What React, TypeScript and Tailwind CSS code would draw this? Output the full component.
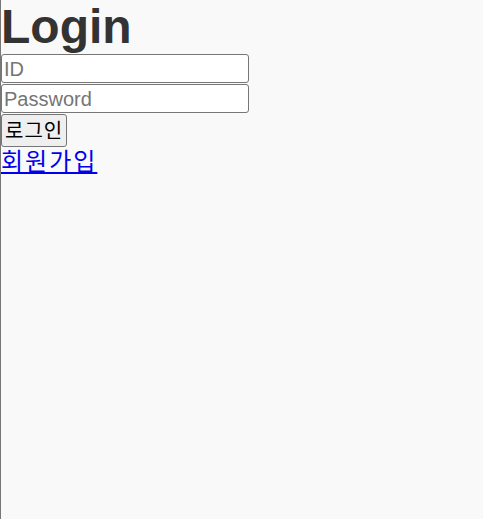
export default function App() {
  return (
    <div className="min-h-screen bg-[#f9f9f9] border-l border-[#777] font-['Liberation_Sans','Noto_Sans_CJK_KR',sans-serif] text-[#333]">
      <h1 className="text-[48px] leading-[54px] font-bold m-0">Login</h1>
      <div className="flex flex-col items-start gap-[1px]">
        <input
          type="text"
          placeholder="ID"
          className="block w-[248px] h-[29px] bg-white border border-[#767676] rounded-[3px] px-[2px] text-[20px] text-black placeholder:text-[#757575]"
        />
        <input
          type="password"
          placeholder="Password"
          className="block w-[248px] h-[29px] bg-white border border-[#767676] rounded-[3px] px-[2px] text-[20px] text-black placeholder:text-[#757575]"
        />
        <button className="h-[33px] px-[3px] bg-[#efefef] border border-[#767676] rounded-[3px] text-[20px] tracking-[1px] text-black">
          로그인
        </button>
      </div>
      <a href="#" className="inline-block text-[24px] leading-[30px] tracking-[2px] underline text-[#0000ee]">
        회원가입
      </a>
    </div>
  );
}
